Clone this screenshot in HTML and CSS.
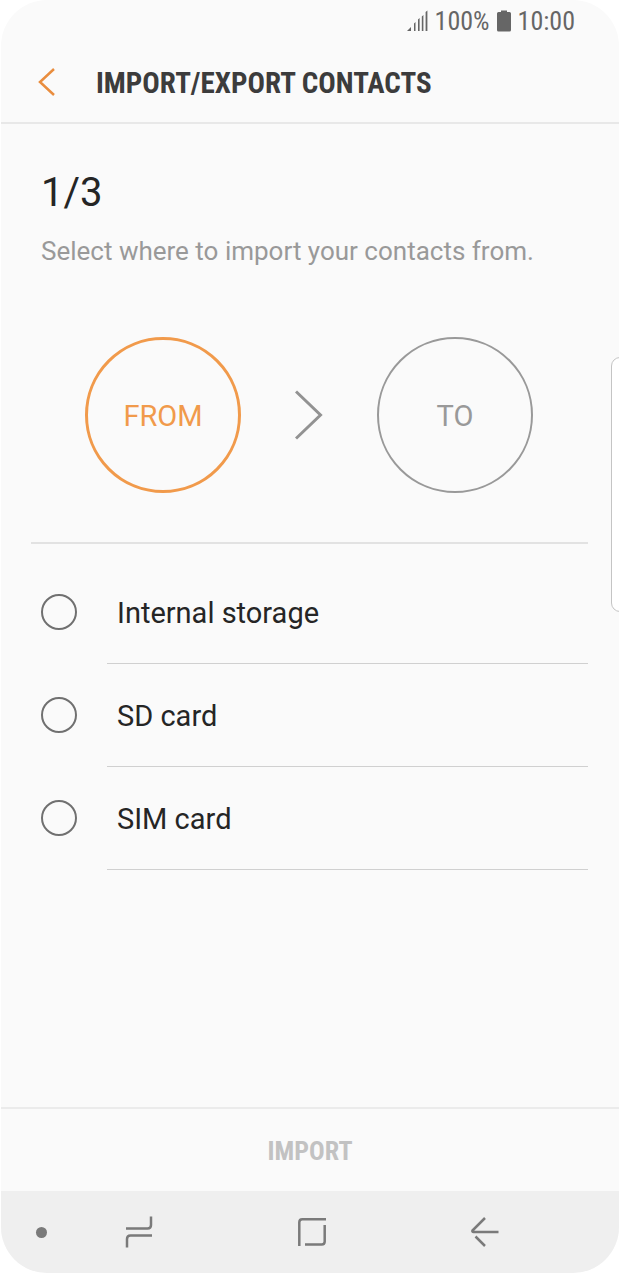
FILE: index.html
```html
<!DOCTYPE html>
<html lang="en">
  <head>
    <meta charset="utf-8">
    <meta name="viewport" content="width=device-width, initial-scale=1">
    <title>Import/Export contacts</title>
    <link rel="stylesheet" href="styles.css">
  </head>
  <body>
    <div class="screen">
      <div class="status-bar">
        <svg class="signal" width="22" height="22" viewBox="0 0 22 22">
          <path d="M1 21 L5 17 V21 Z M8 13.5 L9.5 12 V21 H8 Z M12 9.5 L13.6 8 V21 H12 Z M15.8 6.5 L17.4 5 V21 H15.8 Z M19.6 2 L21.4 0.5 V21 H19.6 Z" />
        </svg>
        <span>100%</span>
        <svg class="battery" width="14" height="22" viewBox="0 0 14 22">
          <path d="M4 0.5 H10 V2 H12.5 Q14 2 14 3.5 V20 Q14 21.5 12.5 21.5 H1.5 Q0 21.5 0 20 V3.5 Q0 2 1.5 2 H4 Z" />
        </svg>
        <span>10:00</span>
      </div>

      <header class="header">
        <button type="button" class="back" aria-label="Back">
          <svg width="18" height="28" viewBox="0 0 18 28">
            <path d="M16 1 L2 14 L16 27" />
          </svg>
        </button>
        <h1>IMPORT/EXPORT CONTACTS</h1>
      </header>

      <main>
        <h2>1/3</h2>
        <p class="hint">Select where to import your contacts from.</p>

        <div class="steps">
          <button type="button" class="step active">FROM</button>
          <svg class="arrow" width="28" height="50" viewBox="0 0 28 50">
            <path d="M1 1.5 L25.5 25 L1 48.5" />
          </svg>
          <button type="button" class="step">TO</button>
        </div>

        <form class="sources">
          <div class="source">
            <input type="radio" name="source" id="internal">
            <label for="internal">Internal storage</label>
          </div>
          <div class="source">
            <input type="radio" name="source" id="sd">
            <label for="sd">SD card</label>
          </div>
          <div class="source">
            <input type="radio" name="source" id="sim">
            <label for="sim">SIM card</label>
          </div>
        </form>
      </main>

      <footer class="action">
        <button type="button" disabled>IMPORT</button>
      </footer>

      <nav class="nav-bar">
        <button type="button" aria-label="Hide navigation bar"><span class="dot"></span></button>
        <button type="button" aria-label="Recent apps">
          <svg width="28" height="32" viewBox="0 0 28 32">
            <path d="M1 12.5 H22.5 Q26 12.5 26 9 V0.5 M27 19.5 H5.5 Q2 19.5 2 23 V31.5" />
          </svg>
        </button>
        <button type="button" aria-label="Home">
          <svg width="28" height="28" viewBox="0 0 28 28">
            <path d="M1.3 28 V4.3 Q1.3 1.3 4.3 1.3 H28 M26.7 7 V23.5 Q26.7 26.5 23.7 26.5 H7" />
          </svg>
        </button>
        <button type="button" aria-label="Back">
          <svg width="28" height="30" viewBox="0 0 28 30">
            <path d="M14 1 L1.5 13.5 Q1 15 2.5 15 H27.5 M4.5 19.5 L14 29" />
          </svg>
        </button>
      </nav>

      <div class="edge-panel"></div>
    </div>
  </body>
</html>
```
FILE: styles.css
```css
* {
  box-sizing: border-box;
}
body {
  margin: 0;
  background-color: white;
  font-family: Roboto, "Liberation Sans", sans-serif;
  color: #252525;
}
button {
  padding: 0;
  border: none;
  background: none;
  font-family: inherit;
}
svg {
  display: block;
  fill: none;
}
.screen {
  position: relative;
  display: flex;
  flex-direction: column;
  min-height: calc(100vh - 1px);
  margin: 0 0 1px 1px;
  border-radius: 46px;
  overflow: hidden;
  background-color: #fafafa;
}

/* status bar */
.status-bar {
  display: flex;
  justify-content: flex-end;
  align-items: center;
  gap: 7px;
  height: 41px;
  padding-right: 44px;
  font-family: "Roboto Condensed", Roboto, sans-serif;
  font-size: 26px;
  color: #666;
}
.signal,
.battery {
  fill: #666;
}

/* header */
.header {
  display: flex;
  align-items: center;
  height: 83px;
  padding-left: 37px;
  border-bottom: 2px solid #e8e8e8;
}
.back {
  width: 58px;
}
.back svg {
  stroke: #e98d3e;
  stroke-width: 2.5;
}
h1 {
  margin: 0;
  padding-top: 2px;
  font-family: "Roboto Condensed", Roboto, sans-serif;
  font-size: 29px;
  font-weight: bold;
  color: #3c3c3c;
}

main {
  flex: 1;
}
h2 {
  margin: 45px 40px 0;
  font-size: 40px;
  line-height: 48px;
  font-weight: normal;
}
.hint {
  margin: 18px 40px 0;
  font-size: 26px;
  line-height: 32px;
  color: #999;
}

/* from > to */
.steps {
  display: flex;
  justify-content: space-between;
  align-items: center;
  margin: 0 31px 0 30px;
  padding: 70px 55px 49px 54px;
  border-bottom: 2px solid #e2e2e2;
}
.step {
  width: 156px;
  height: 156px;
  padding-top: 2px;
  border: 2px solid #999;
  border-radius: 50%;
  font-size: 29px;
  color: #999;
}
.step.active {
  border: 3px solid #f19a4b;
  color: #f19a4b;
}
.arrow {
  stroke: #929292;
  stroke-width: 3;
}

/* list */
.sources {
  padding: 17px 31px 0 40px;
}
.source {
  display: flex;
  align-items: center;
  gap: 30px;
}
.source input {
  appearance: none;
  width: 36px;
  height: 36px;
  margin: 0 0 2px;
  border: 2px solid #707070;
  border-radius: 50%;
}
.source input:checked {
  border: 10px solid #f19a4b;
}
.source label {
  flex: 1;
  padding: 2px 0 0 10px;
  border-bottom: 1px solid #d0d0d0;
  font-size: 29px;
  line-height: 100px;
}

/* bottom */
.action {
  height: 84px;
  border-top: 2px solid #ebebeb;
}
.action button {
  width: 100%;
  height: 100%;
  padding-top: 2px;
  font-family: "Roboto Condensed", Roboto, sans-serif;
  font-size: 26px;
  font-weight: bold;
  color: #c2c2c2;
}
.nav-bar {
  display: grid;
  grid-template-columns: 51px 1fr 1fr 1fr;
  height: 82px;
  padding-right: 48px;
  background-color: #efefef;
}
.nav-bar button {
  display: flex;
  justify-content: center;
  align-items: center;
}
.nav-bar button:first-child {
  padding-left: 29px;
}
.nav-bar svg {
  stroke: #7a7a7a;
  stroke-width: 2.5;
}
.dot {
  width: 11px;
  height: 11px;
  border-radius: 50%;
  background-color: #7a7a7a;
}

/* handle sticking out of the right side */
.edge-panel {
  position: absolute;
  top: 357px;
  right: -2px;
  width: 10px;
  height: 255px;
  border: 1px solid #c4c4c4;
  border-radius: 9px 0 0 9px;
  background-color: white;
}
```
